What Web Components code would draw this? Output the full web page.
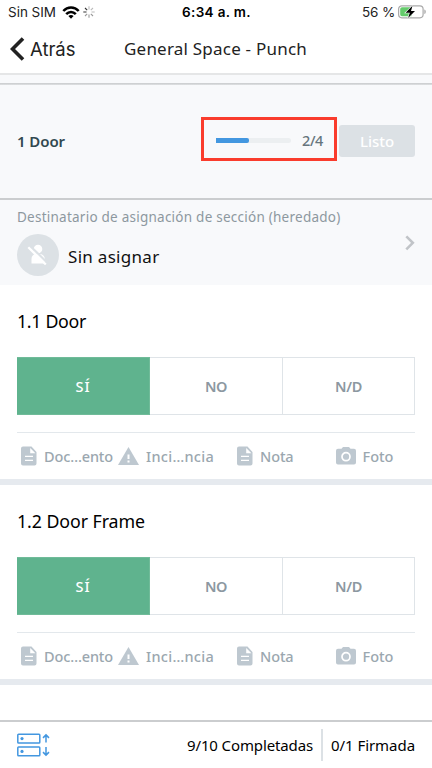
<!DOCTYPE html>
<html lang="es"><head><meta charset="utf-8"><title>General Space - Punch</title>
<style>html,body{margin:0;height:768px;overflow:hidden;background:#fff}body{font-family:"Noto Sans",sans-serif}</style></head>
<body><punch-app></punch-app>
<script>
const define=(name,html,init)=>customElements.define(name,class extends HTMLElement{
  connectedCallback(){
    if(this.shadowRoot)return;
    const t=document.createElement('template');t.innerHTML=html;
    this.attachShadow({mode:'open'}).append(t.content.cloneNode(true));
    if(init)init.call(this,this.shadowRoot);
  }
});

// One line of text, tracked so that it spans the width given in "w".
define('fit-text',`<style>:host{display:block;flex:none;white-space:pre}span{display:inline-block}</style><span><slot></slot></span>`,function(r){
  const s=r.querySelector('span'),w=+this.getAttribute('w'),n=[...this.textContent].length;
  this.style.width=w+'px';
  const k=(w-s.getBoundingClientRect().width)/n;
  s.style.letterSpacing=k+'px';
});

const icons={
  doc:'<svg width="16" height="20" viewBox="0 0 16 20"><path fill="#bec8d0" d="M2 .5h8.5L15.500 6v11.500a2 2 0 0 1-2 2H2a2 2 0 0 1-2-2v-15a2 2 0 0 1 2-2z"/><path fill="#fff" d="M9.200 2v5.200h5.200zM4 9.700h8v1.400H4zM4 13.700h8v1.400H4z"/></svg>',
  warn:'<svg width="21" height="18" viewBox="0 0 21 18"><path fill="#bec8d0" d="M10.500 0 21 18H0z"/><path fill="#fff" d="M9.500 7.500h2v4.500h-2zM9.500 13.500h2v2h-2z"/></svg>',
  cam:'<svg width="20" height="18" viewBox="0 0 20 18"><path fill="#bec8d0" d="M7 0h6l1.500 1.800H18a2 2 0 0 1 2 2V15.500a2 2 0 0 1-2 2H2a2 2 0 0 1-2-2V3.800a2 2 0 0 1 2-2h3.500z"/><circle cx="10" cy="9.700" r="4" fill="none" stroke="#fff" stroke-width="1.700"/></svg>',
  wifi:'<svg width="18" height="13" viewBox="0 0 18 13"><g fill="none" stroke="#000" stroke-width="2.500"><path d="M1.300 5C5.600.4 12.400.4 16.700 5"/><path d="M4.200 8.200c2.700-2.900 6.900-2.900 9.600 0"/></g><path d="M9 12.700 6.400 10c1.500-1.400 3.700-1.400 5.200 0z"/></svg>',
  spin:'<svg width="12" height="12" viewBox="0 0 12 12"><g stroke="#999" stroke-width="1.100"><path stroke="#bbb" d="M6 .3v3.200M10 2 7.800 4.200M11.700 6H8.500"/><path d="M10 10 7.800 7.800M6 11.700V8.500M2 10l2.200-2.200"/><path stroke="#333" d="M.3 6h3.200M2 2l2.200 2.200"/></g></svg>',
  battery:'<svg width="29" height="14" viewBox="0 0 29 14"><rect x=".6" y=".8" width="24.500" height="12" rx="3.200" fill="#fff" stroke="#aaa" stroke-width="1.200"/><path fill="#64cb6b" d="M4 2.300h9.500v9H4a1.800 1.800 0 0 1-1.800-1.800V4.100A1.800 1.800 0 0 1 4 2.300z"/><path fill="#aaa" d="M26.300 4.500c2 .5 2 4 0 4.500z"/><path d="M14.500.8 7.600 7.700h4.200l-1.700 5.200 6.900-7H13z" stroke="#fff" stroke-width="1.200" paint-order="stroke"/></svg>',
  back:'<svg width="15" height="24" viewBox="0 0 15 24"><path d="M13 1.500 2.500 12 13 22.500" fill="none" stroke="#222" stroke-width="3.600"/></svg>',
  next:'<svg width="10" height="16" viewBox="0 0 10 16"><path d="m1.300 1.300 6.500 6.500-6.500 6.500" fill="none" stroke="#c1c4c8" stroke-width="2.600"/></svg>',
  user:'<svg width="42" height="42" viewBox="0 0 42 42"><circle cx="21" cy="21" r="21" fill="#dce1e5"/><circle cx="21" cy="15" r="4.300" fill="#fff"/><path fill="#fff" d="M14.500 29.500V25c0-3.800 2.500-5.300 6.500-5.300s6.800 2 6.800 5.300v4.500z"/><path d="m13.200 12 17.500 17.200" stroke="#dce1e5" stroke-width="2.300"/><path d="m11.300 13.200 17.500 17.300" stroke="#fff" stroke-width="2.300"/></svg>',
  sync:'<svg width="33" height="24" viewBox="0 0 33 24"><g fill="none" stroke="#4397e0" stroke-width="1.500"><rect x=".8" y="1.200" width="22" height="8.800" rx=".8"/><rect x=".8" y="14" width="22" height="8.800" rx=".8"/><path d="M29 9.500V1.700m-3 3.200 3-3 3 3M29 14v8.300m-3-3.200 3 3 3-3"/></g><g fill="#4397e0"><circle cx="5" cy="5.600" r="1.600"/><circle cx="5" cy="18.400" r="1.600"/></g></svg>'
};
define('ui-icon','<style>:host{display:block;flex:none}svg{display:block}</style>',function(r){
  r.innerHTML+=icons[this.getAttribute('name')];
});

define('status-bar',`<style>:host{display:grid;grid-template-columns:1fr 71px 1fr;height:24px;align-items:center;padding:0 5px 0 8px;font:13.500px/24px Inter,sans-serif;color:#222;box-sizing:border-box}
.l,.r{display:flex;align-items:center}.l{gap:6px}.r{justify-content:flex-end;gap:3px}b{font-weight:600;color:#000}.l ui-icon:last-child{margin-left:-3px}</style>
<div class="l"><fit-text w="48">Sin SIM</fit-text><ui-icon name="wifi"></ui-icon><ui-icon name="spin"></ui-icon></div>
<b><fit-text w="69">6:34 a. m.</fit-text></b>
<div class="r"><fit-text w="33">56 %</fit-text><ui-icon name="battery"></ui-icon></div>`);

define('nav-bar',`<style>:host{display:flex;align-items:center;height:51px;box-sizing:border-box;border-bottom:2px solid #e5e6e7;padding-left:10px;color:#222}
.a{font:18.500px/30px Inter,sans-serif;margin-left:5px}.t{font-size:17px;line-height:30px;margin-left:48.5px;padding-top:1px}</style>
<ui-icon name="back"></ui-icon><fit-text class="a" w="45.5">Atrás</fit-text><fit-text class="t" w="183">General Space - Punch</fit-text>`);

define('progress-bar',`<style>:host{display:block;width:75px;height:5px;border-radius:0 3px 3px 0;background:#eceff1;overflow:hidden}i{display:block;width:33px;height:5px;border-radius:0 2px 2px 0;background:#4397e0}</style><i></i>`);

define('section-head',`<style>:host{display:flex;align-items:center;height:125px;box-sizing:border-box;padding:8px 17px 0;border-bottom:2px solid #cbcdcf;background:linear-gradient(#f8f9fb 8px,#c8cacc 8px,#dfe1e3 10px,#f8f9fb 10px)}
.n{font-size:15px;font-weight:600;color:#324950;flex:1}
.p{display:flex;align-items:center;box-sizing:border-box;border:3px solid #fa3c2d;width:136px;height:44px;padding:3px 0 0 12px;gap:11px;font-size:14.500px;font-weight:500;color:#66757d;margin-top:-3px}
.p fit-text{margin-top:-2px}
.d{display:flex;justify-content:center;align-items:center;width:76px;height:32px;border-radius:3px;background:#dce1e5;color:#fff;font-weight:500;font-size:15px;margin-left:2px}</style>
<div class="n"><fit-text w="48">1 Door</fit-text></div><div class="p"><progress-bar></progress-bar><fit-text w="21">2/4</fit-text></div><div class="d"><fit-text w="34">Listo</fit-text></div>`);

define('assignee-row',`<style>:host{display:block;height:85px;background:#f8f9fb;box-sizing:border-box;padding:7px 17px 0}
.h{font-size:13.500px;line-height:20px;color:#8d989f}.r{display:flex;align-items:center;height:42px;margin-top:7px}
.t{font-size:17px;color:#111;margin-left:9px;flex:1;padding-top:2px}.c{margin-top:-25px}</style>
<fit-text class="h" w="323.500">Destinatario de asignación de sección (heredado)</fit-text>
<div class="r"><ui-icon name="user"></ui-icon><div class="t"><fit-text w="91.500">Sin asignar</fit-text></div><ui-icon class="c" name="next"></ui-icon></div>`);

define('check-item',`<style>:host{display:block;height:200px;box-sizing:border-box;border-bottom:6px solid #e6eaef;padding:22px 17px 0;background:#fff}
h2{font-size:17.800px;line-height:28px;font-weight:400;margin:0;color:#000}
.o{display:grid;grid-template-columns:133px 133px 1fr;height:58px;margin-top:22px;font-size:14.500px;font-weight:600;color:#8c98a1}
.o div{display:flex;align-items:center;justify-content:center;border:1px solid #dfe4e8;border-left:0;box-sizing:border-box;padding-bottom:1px}
.o .y{background:#5fb38e;border-color:#70bb99;color:#fff;font-weight:500}
.m{display:flex;align-items:center;border-top:1px solid #e3e8ec;margin-top:17px;height:47px;box-sizing:border-box;font-size:14.500px;font-weight:500;color:#9ba7af;padding-left:4px}
.m fit-text{margin-left:7px}</style>
<h2><slot></slot></h2><div class="o"><div class="y"><fit-text w="15">SÍ</fit-text></div><div><fit-text w="22">NO</fit-text></div><div><fit-text w="27">N/D</fit-text></div></div>
<div class="m"><ui-icon name="doc"></ui-icon><fit-text w="69">Doc…ento</fit-text><ui-icon name="warn" style="margin-left:5px"></ui-icon><fit-text w="68">Inci…ncia</fit-text><ui-icon name="doc" style="margin-left:23px"></ui-icon><fit-text w="33.5">Nota</fit-text><ui-icon name="cam" style="margin-left:42px"></ui-icon><fit-text w="31">Foto</fit-text></div>`);

define('footer-bar',`<style>:host{display:flex;align-items:center;height:48px;box-sizing:border-box;border-top:2px solid #cbcdcf;padding-left:17px;font-size:15px;font-weight:400;color:#000;background:#fff}
ui-icon{margin-right:auto}i{width:2px;height:32px;background:#dce1e5;margin:0 8px}.s{margin-right:17px}fit-text{margin-top:-1px}</style>
<ui-icon name="sync"></ui-icon><fit-text w="126">9/10 Completadas</fit-text><i></i><fit-text class="s" w="84">0/1 Firmada</fit-text>`);

define('punch-app',`<style>:host{display:flex;flex-direction:column;width:432px;height:768px}footer-bar{margin-top:auto}</style>
<status-bar></status-bar><nav-bar></nav-bar><section-head></section-head><assignee-row></assignee-row>
<check-item><fit-text w="69">1.1 Door</fit-text></check-item><check-item><fit-text w="128">1.2 Door Frame</fit-text></check-item><footer-bar></footer-bar>`);
</script></body></html>
